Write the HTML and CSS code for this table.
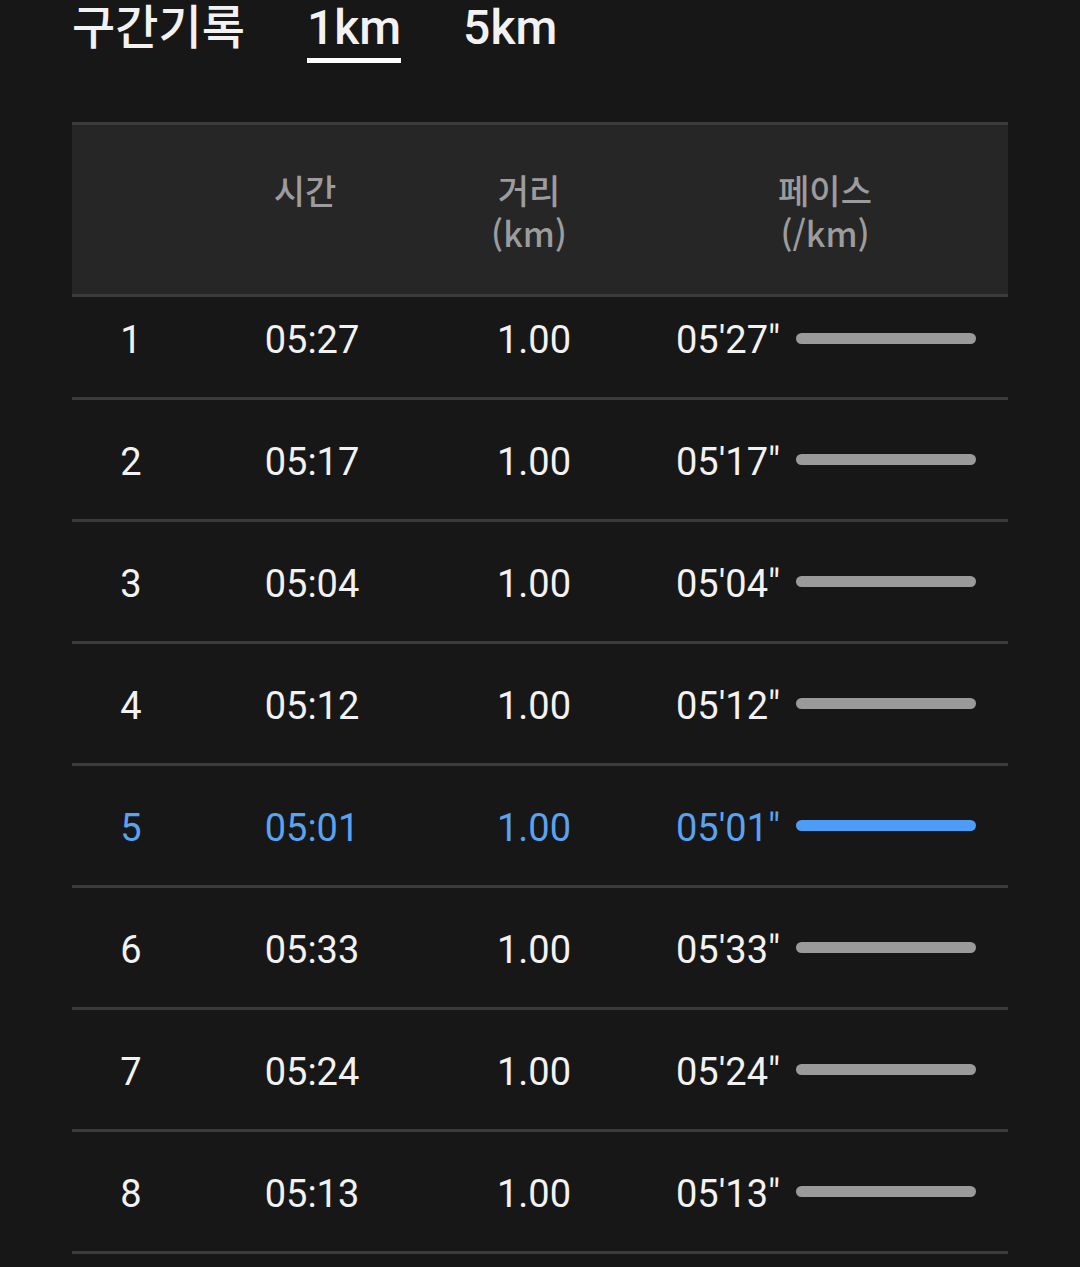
FILE: index.html
```html
<!DOCTYPE html>
<html lang="ko">
<head>
<meta charset="utf-8">
<link rel="stylesheet" href="styles.css">
</head>
<body>
<div class="page">
  <div class="tabs">
    <span class="title">구간기록</span>
    <span class="tab active">1km</span>
    <span class="tab">5km</span>
  </div>
  <div class="table">
    <div class="thead">
      <div class="th"></div>
      <div class="th th-time">시간</div>
      <div class="th th-dist">거리<br>(km)</div>
      <div class="th th-pace">페이스<br>(/km)</div>
    </div>
    <div class="row first"><div class="c idx">1</div><div class="c time">05:27</div><div class="c dist">1.00</div><div class="c pace"><span>05'27"</span><i class="bar"></i></div></div>
    <div class="row"><div class="c idx">2</div><div class="c time">05:17</div><div class="c dist">1.00</div><div class="c pace"><span>05'17"</span><i class="bar"></i></div></div>
    <div class="row"><div class="c idx">3</div><div class="c time">05:04</div><div class="c dist">1.00</div><div class="c pace"><span>05'04"</span><i class="bar"></i></div></div>
    <div class="row"><div class="c idx">4</div><div class="c time">05:12</div><div class="c dist">1.00</div><div class="c pace"><span>05'12"</span><i class="bar"></i></div></div>
    <div class="row best"><div class="c idx">5</div><div class="c time">05:01</div><div class="c dist">1.00</div><div class="c pace"><span>05'01"</span><i class="bar"></i></div></div>
    <div class="row"><div class="c idx">6</div><div class="c time">05:33</div><div class="c dist">1.00</div><div class="c pace"><span>05'33"</span><i class="bar"></i></div></div>
    <div class="row"><div class="c idx">7</div><div class="c time">05:24</div><div class="c dist">1.00</div><div class="c pace"><span>05'24"</span><i class="bar"></i></div></div>
    <div class="row"><div class="c idx">8</div><div class="c time">05:13</div><div class="c dist">1.00</div><div class="c pace"><span>05'13"</span><i class="bar"></i></div></div>
  </div>
</div>
</body>
</html>
```
FILE: styles.css
```css
html, body {
  margin: 0;
  padding: 0;
  background: #171717;
}
body {
  font-family: Roboto, "Noto Sans CJK KR", sans-serif;
  color: #f2f2f2;
  height: 1267px;
  overflow: hidden;
}
.page {
  padding-left: 72px;
  width: 936px;
}
.tabs {
  display: flex;
  align-items: baseline;
  gap: 62px;
  height: 62px;
  margin-top: -3px;
  margin-bottom: 63px;
}
.title {
  font-family: "Noto Sans CJK KR", sans-serif;
  font-size: 47px;
  font-weight: 500;
  line-height: 54px;
}
.tab {
  font-size: 48px;
  font-weight: 500;
  line-height: 54px;
  padding-bottom: 3px;
  border-bottom: 5px solid transparent;
}
.tab.active {
  border-bottom-color: #ffffff;
}
.table {
  border-top: 3px solid #3b3b3b;
}
.thead {
  display: grid;
  grid-template-columns: 118px 244px 200px 374px;
  height: 169px;
  background: #262626;
  border-bottom: 3px solid #3b3b3b;
}
.th {
  font-family: "Noto Sans CJK KR", Roboto, sans-serif;
  color: #9c9c9c;
  font-size: 34px;
  font-weight: 500;
  line-height: 43px;
  text-align: center;
  padding-top: 43px;
}
.th-time { padding-right: 14px; }
.th-dist { padding-right: 10px; }
.th-pace { padding-left: 8px; }
.row {
  display: grid;
  grid-template-columns: 118px 244px 200px 374px;
  align-items: center;
  height: 119px;
  border-bottom: 3px solid #3b3b3b;
  font-size: 38px;
  line-height: 44px;
}
.row .c {
  padding-top: 4px;
}
.row.first {
  height: 100px;
  align-items: start;
}
.row.first .c {
  padding-top: 21px;
}
.c { text-align: center; }
.pace {
  display: flex;
  align-items: center;
  gap: 16px;
  padding-left: 42px;
  text-align: left;
}
.bar {
  display: block;
  width: 180px;
  height: 11px;
  border-radius: 6px;
  background: #9a9a9a;
  margin-top: -4px;
}
.row.best { color: #5aa2f2; }
.row.best .bar { background: #4d9cf6; }
```
